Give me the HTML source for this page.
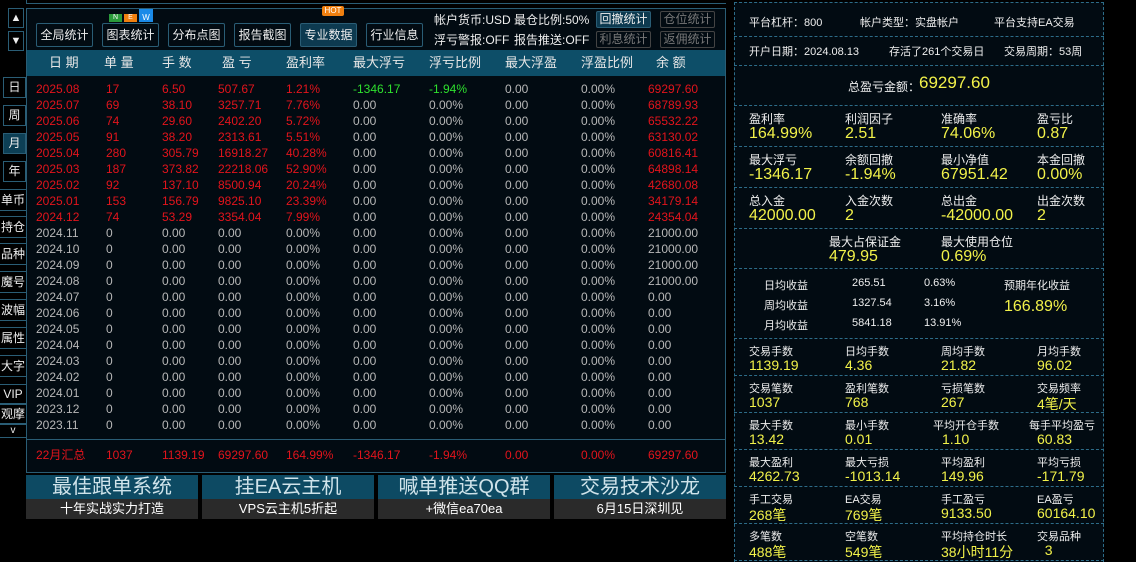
<!DOCTYPE html>
<html><head><meta charset="utf-8">
<style>
*{margin:0;padding:0;box-sizing:border-box}
body{width:1136px;height:562px;background:#000;position:relative;overflow:hidden;font-family:"Liberation Sans","Noto Sans CJK SC",sans-serif;font-size:12px;color:#ddd}
div,span{white-space:nowrap}
.a{position:absolute}
.btn{position:absolute;border:1px solid #2a5d75;border-radius:2px;background:#020b12;color:#eee;font-size:12px;text-align:center}
.side{position:absolute;left:3px;width:23px;border:1px solid #2a5d75;color:#eee;text-align:center;font-size:12px;background:#000}
.sd2{position:absolute;left:0;width:26px;border-top:1px solid #2a5d75;border-bottom:1px solid #2a5d75;color:#eee;text-align:center;font-size:12px;height:22px;line-height:20px}
.r{color:#e3141c}.g{color:#b8b8b8}.gr{color:#2ee02e}
.row{position:absolute;left:36px;width:680px;height:16px;line-height:16px;font-size:12px}
.row span{position:absolute;top:0}
.rp{position:absolute;left:734px;width:370px;border-bottom:1px dashed #2d6c88}
.lbl{position:absolute;font-size:12px;color:#eee}
.val{position:absolute;font-size:16px;color:#f2f24a}
.ban{position:absolute;top:475px;width:172px;height:44px}
.ban .t{height:24px;background:#0d4a63;color:#cfe3ea;font-size:20px;line-height:24px;text-align:center}
.ban .b{height:20px;background:#2a2a2a;color:#fff;font-size:13px;line-height:20px;text-align:center}
</style></head><body>
<div class="a" style="left:26px;top:0;width:700px;height:4px;border-bottom:1px solid #2a5d75;border-left:1px solid #2a5d75"></div>
<div class="a" style="left:26px;top:8px;width:700px;height:465px;border:1px solid #2a5d75;background:#020b12"></div>
<div class="a" style="left:27px;top:50px;width:698px;height:26px;background:#0d4e68"></div>
<div class="a" style="left:27px;top:439px;width:698px;height:1px;background:#2a5d75"></div>
<div class="side" style="left:8px;top:8px;width:16px;height:20px;line-height:18px;font-size:11px">▲</div>
<div class="side" style="left:8px;top:31px;width:16px;height:20px;line-height:18px;font-size:11px">▼</div>
<div class="side" style="top:77px;height:21px;line-height:19px">日</div>
<div class="side" style="top:105px;height:21px;line-height:19px">周</div>
<div class="side" style="top:133px;height:21px;line-height:19px;background:#0d3f55">月</div>
<div class="side" style="top:161px;height:21px;line-height:19px">年</div>
<div class="sd2" style="top:189px">单币</div>
<div class="sd2" style="top:216px">持仓</div>
<div class="sd2" style="top:243px">品种</div>
<div class="sd2" style="top:271px">魔号</div>
<div class="sd2" style="top:299px">波幅</div>
<div class="sd2" style="top:327px">属性</div>
<div class="sd2" style="top:355px">大字</div>
<div class="sd2" style="top:384px;height:20px;line-height:18px">VIP</div>
<div class="sd2" style="top:404px;height:20px;line-height:18px">观摩</div>
<div class="sd2" style="top:424px;height:14px;line-height:12px;font-size:10px">v</div>
<div class="btn" style="left:36px;top:23px;width:57px;height:24px;line-height:22px">全局统计</div>
<div class="btn" style="left:102px;top:23px;width:57px;height:24px;line-height:22px">图表统计</div>
<div class="a" style="left:109px;top:14px;width:13px;height:8px;background:#2a9a3a;color:#fff;font-size:7px;line-height:8px;text-align:center">N</div>
<div class="a" style="left:124px;top:14px;width:13px;height:8px;background:#f08010;color:#fff;font-size:7px;line-height:8px;text-align:center">E</div>
<div class="a" style="left:139px;top:9px;width:14px;height:13px;background:#1a8ae8;color:#fff;font-size:8px;line-height:17px;text-align:center">W</div>
<div class="btn" style="left:168px;top:23px;width:57px;height:24px;line-height:22px">分布点图</div>
<div class="btn" style="left:234px;top:23px;width:57px;height:24px;line-height:22px">报告截图</div>
<div class="btn" style="left:300px;top:23px;width:57px;height:24px;line-height:22px;background:#0d3a50">专业数据</div>
<div class="a" style="left:322px;top:6px;width:22px;height:10px;background:#f08010;color:#fff;font-size:8px;line-height:10px;text-align:center;border-radius:2px">HOT</div>
<div class="btn" style="left:366px;top:23px;width:57px;height:24px;line-height:22px">行业信息</div>
<div class="a" style="left:434px;top:11px;color:#eee">帐户货币:USD</div>
<div class="a" style="left:514px;top:11px;color:#eee">最仓比例:50%</div>
<div class="a" style="left:434px;top:31px;color:#eee">浮亏警报:OFF</div>
<div class="a" style="left:514px;top:31px;color:#eee">报告推送:OFF</div>
<div class="btn" style="left:596px;top:11px;width:55px;height:17px;line-height:15px;background:#0d3a50">回撤统计</div>
<div class="btn" style="left:660px;top:11px;width:55px;height:17px;line-height:15px;color:#777;border-color:#444">仓位统计</div>
<div class="btn" style="left:596px;top:31px;width:55px;height:17px;line-height:15px;color:#777;border-color:#444">利息统计</div>
<div class="btn" style="left:660px;top:31px;width:55px;height:17px;line-height:15px;color:#777;border-color:#444">返佣统计</div>
<div class="row" style="top:55px;color:#e6e6e6;font-size:13px">
<span style="left:13px">日 期</span><span style="left:68px">单 量</span><span style="left:126px">手 数</span><span style="left:186px">盈 亏</span><span style="left:250px">盈利率</span><span style="left:317px">最大浮亏</span><span style="left:393px">浮亏比例</span><span style="left:469px">最大浮盈</span><span style="left:545px">浮盈比例</span><span style="left:620px">余 额</span>
</div>
<div id="rows"></div>
<div class="row r" style="top:447px">
<span style="left:0">22月汇总</span><span style="left:70px">1037</span><span style="left:126px">1139.19</span><span style="left:182px">69297.60</span><span style="left:250px">164.99%</span><span style="left:317px">-1346.17</span><span style="left:393px">-1.94%</span><span style="left:469px">0.00</span><span style="left:545px">0.00%</span><span style="left:612px">69297.60</span>
</div>
<div class="ban" style="left:26px"><div class="t">最佳跟单系统</div><div class="b">十年实战实力打造</div></div>
<div class="ban" style="left:202px"><div class="t">挂EA云主机</div><div class="b">VPS云主机5折起</div></div>
<div class="ban" style="left:378px"><div class="t">喊单推送QQ群</div><div class="b">+微信ea70ea</div></div>
<div class="ban" style="left:554px"><div class="t">交易技术沙龙</div><div class="b">6月15日深圳见</div></div>
<div class="a" style="left:734px;top:2px;width:370px;height:560px;border-left:1px dashed #2d6c88;border-right:1px dashed #2d6c88;border-top:1px dashed #2d6c88;background:#020b12"></div>
<div class="rp" style="top:2px;height:35px"></div>
<div class="rp" style="top:37px;height:29px"></div>
<div class="rp" style="top:66px;height:40px"></div>
<div class="rp" style="top:106px;height:41px"></div>
<div class="rp" style="top:147px;height:41px"></div>
<div class="rp" style="top:188px;height:41px"></div>
<div class="rp" style="top:229px;height:40px"></div>
<div class="rp" style="top:269px;height:70px"></div>
<div class="rp" style="top:339px;height:37px"></div>
<div class="rp" style="top:376px;height:37px"></div>
<div class="rp" style="top:413px;height:37px"></div>
<div class="rp" style="top:450px;height:37px"></div>
<div class="rp" style="top:487px;height:37px"></div>
<div class="rp" style="top:524px;height:37px"></div>
<div class="lbl" style="left:749px;top:14px;font-size:11px">平台杠杆：800</div>
<div class="lbl" style="left:860px;top:14px;font-size:11px">帐户类型：实盘帐户</div>
<div class="lbl" style="left:994px;top:14px;font-size:11px">平台支持EA交易</div>
<div class="lbl" style="left:749px;top:43px;font-size:11px">开户日期：2024.08.13</div>
<div class="lbl" style="left:889px;top:43px;font-size:11px">存活了261个交易日</div>
<div class="lbl" style="left:1004px;top:43px;font-size:11px">交易周期：53周</div>
<div class="lbl" style="left:848px;top:78px">总盈亏金额：</div>
<div class="val" style="left:919px;top:73px;font-size:17px">69297.60</div>
<div id="grid"></div>
<div class="lbl" style="left:829px;top:233px">最大占保证金</div><div class="val" style="left:829px;top:248px">479.95</div>
<div class="lbl" style="left:941px;top:233px">最大使用仓位</div><div class="val" style="left:941px;top:248px">0.69%</div>
<div class="lbl" style="left:764px;top:277px;font-size:11px">日均收益</div><div class="lbl" style="left:852px;top:277px;font-size:11px">265.51</div><div class="lbl" style="left:924px;top:277px;font-size:11px">0.63%</div>
<div class="lbl" style="left:764px;top:297px;font-size:11px">周均收益</div><div class="lbl" style="left:852px;top:297px;font-size:11px">1327.54</div><div class="lbl" style="left:924px;top:297px;font-size:11px">3.16%</div>
<div class="lbl" style="left:764px;top:317px;font-size:11px">月均收益</div><div class="lbl" style="left:852px;top:317px;font-size:11px">5841.18</div><div class="lbl" style="left:924px;top:317px;font-size:11px">13.91%</div>
<div class="lbl" style="left:1004px;top:277px;font-size:11px">预期年化收益</div>
<div class="val" style="left:1004px;top:298px">166.89%</div>
<script>
var d=[["2025.08","17","6.50","507.67","1.21%","-1346.17","-1.94%","69297.60"],["2025.07","69","38.10","3257.71","7.76%","","","68789.93"],["2025.06","74","29.60","2402.20","5.72%","","","65532.22"],["2025.05","91","38.20","2313.61","5.51%","","","63130.02"],["2025.04","280","305.79","16918.27","40.28%","","","60816.41"],["2025.03","187","373.82","22218.06","52.90%","","","64898.14"],["2025.02","92","137.10","8500.94","20.24%","","","42680.08"],["2025.01","153","156.79","9825.10","23.39%","","","34179.14"],["2024.12","74","53.29","3354.04","7.99%","","","24354.04"]];
var z=["2024.11","2024.10","2024.09","2024.08","2024.07","2024.06","2024.05","2024.04","2024.03","2024.02","2024.01","2023.12","2023.11"];
var bal={"2024.11":"21000.00","2024.10":"21000.00","2024.09":"21000.00","2024.08":"21000.00"};
var L=[0,70,126,182,250,317,393,469,545,612],h="";
d.forEach(function(r,i){var t=89+i*16;h+='<div class="row" style="top:'+(t-8)+'px">';
var v=[r[0],r[1],r[2],r[3],r[4],r[5]||"0.00",r[6]||"0.00%","0.00","0.00%",r[7]];
v.forEach(function(x,j){var c=(j<5||j==9)?"r":"g";if(i==0&&(j==5||j==6))c="gr";h+='<span class="'+c+'" style="left:'+L[j]+'px">'+x+'</span>';});h+='</div>';});
z.forEach(function(m,k){var t=89+(k+9)*16;h+='<div class="row g" style="top:'+(t-8)+'px">';
var v=[m,"0","0.00","0.00","0.00%","0.00","0.00%","0.00","0.00%",bal[m]||"0.00"];
v.forEach(function(x,j){h+='<span style="left:'+L[j]+'px">'+x+'</span>';});h+='</div>';});
document.getElementById("rows").innerHTML=h;
var g=[[110,[["盈利率","164.99%"],["利润因子","2.51"],["准确率","74.06%"],["盈亏比","0.87"]]],
[151,[["最大浮亏","-1346.17"],["余额回撤","-1.94%"],["最小净值","67951.42"],["本金回撤","0.00%"]]],
[192,[["总入金","42000.00"],["入金次数","2"],["总出金","-42000.00"],["出金次数","2"]]]];
var X=[749,845,941,1037],s="";
g.forEach(function(r){r[1].forEach(function(c,j){s+='<div class="lbl" style="left:'+X[j]+'px;top:'+r[0]+'px">'+c[0]+'</div><div class="val" style="left:'+X[j]+'px;top:'+(r[0]+15)+'px">'+c[1]+'</div>';});});
var g2=[[343,[["交易手数","1139.19"],["日均手数","4.36"],["周均手数","21.82"],["月均手数","96.02"]]],
[380,[["交易笔数","1037"],["盈利笔数","768"],["亏损笔数","267"],["交易频率","4笔/天"]]],
[417,[["最大手数","13.42"],["最小手数","0.01"],["平均开仓手数","1.10"],["每手平均盈亏","60.83"]]],
[454,[["最大盈利","4262.73"],["最大亏损","-1013.14"],["平均盈利","149.96"],["平均亏损","-171.79"]]],
[491,[["手工交易","268笔"],["EA交易","769笔"],["手工盈亏","9133.50"],["EA盈亏","60164.10"]]],
[528,[["多笔数","488笔"],["空笔数","549笔"],["平均持仓时长","38小时11分"],["交易品种","&nbsp;&nbsp;3"]]]];
g2.forEach(function(r){r[1].forEach(function(c,j){var lx=X[j],vx=X[j];if(c[0]=="平均开仓手数"){lx=933;vx=942}if(c[0]=="每手平均盈亏")lx=1029;
s+='<div class="lbl" style="left:'+lx+'px;top:'+r[0]+'px;font-size:11px">'+c[0]+'</div><div class="val" style="left:'+vx+'px;top:'+(r[0]+14)+'px;font-size:14px">'+c[1]+'</div>';});});
document.getElementById("grid").innerHTML=s;
</script>
</body></html>
